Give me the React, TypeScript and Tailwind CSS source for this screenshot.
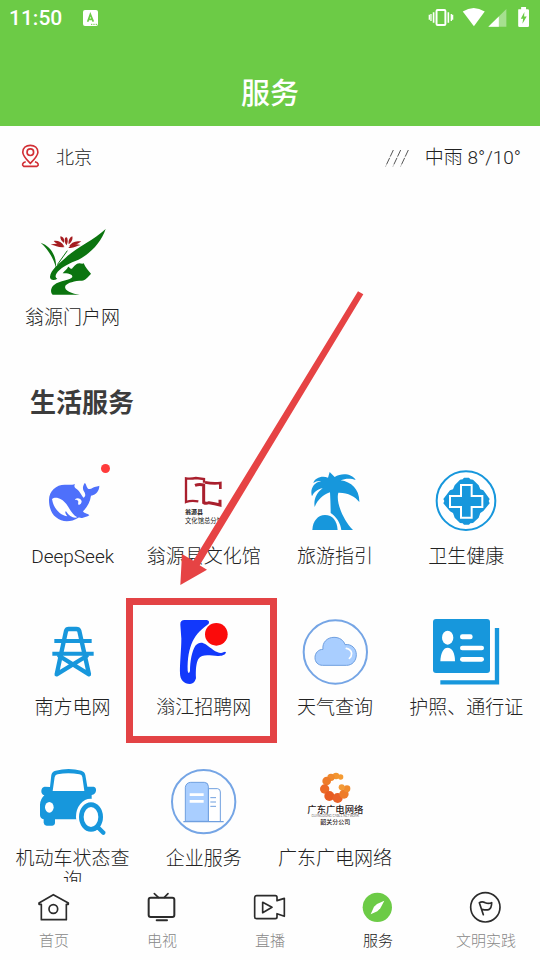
import type { ReactNode } from "react";

const BLUE = "#1797dc";

function Art({ box, children }: { box: string; children: ReactNode }) {
  return (
    <svg viewBox={box} className="size-full overflow-visible" aria-hidden="true">
      {children}
    </svg>
  );
}

function OrchidLogo() {
  return (
    <Art box="120 57 198 198">
      <g fill="#0b740f">
        <path d="M317 57C304 96 268 137 226 153C200 163 179 176 170 190C165 198 166 203 172 206C163 212 149 211 150 200C152 180 176 162 196 144C222 117 281 91 317 57Z" />
        <path d="M122 98C151 108 170 136 168 173C160 144 145 119 122 98Z" />
        <path d="M188 190C194 182 202 178 204 171C207 168 209 178 216 176C222 170 228 160 238 160C243 160 247 162 251 160C256 172 266 184 273 191C265 200 256 211 246 212C224 212 203 218 196 227C190 242 218 251 239 254L158 254C150 246 152 232 163 224C178 212 213 211 217 201C218 192 203 190 188 190Z" />
      </g>
      <path d="M172 164L202 122" stroke="#0b740f" strokeWidth="3" fill="none" />
      <g fill="#a51c20">
        <path d="M181 79C190 80 194 88 192 99C185 94 180 87 181 79Z" />
        <path d="M195 84C200 78 204 83 203 96L200 106C194 100 193 91 195 84Z" />
        <path d="M217 79C219 89 214 98 206 103C204 91 209 82 217 79Z" />
        <path d="M161 93C173 91 184 95 192 108C181 109 169 102 161 93Z" />
        <path d="M244 94C230 93 216 95 208 108C220 110 234 102 244 94Z" />
        <path d="M152 104C170 98 184 102 194 111C178 115 167 105 152 104Z" />
        <path d="M242 105C226 100 213 104 205 113C219 117 228 107 242 105Z" />
      </g>
    </Art>
  );
}

function WhaleLogo() {
  return (
    <Art box="120 54 198 198">
      <path
        d="M147 150C147 122 169 104 194 104C205 104 213 106 225 102C221 109 224 113 231 118C239 124 244 135 250 143C260 138 255 129 250 121C247 112 250 106 254 99C259 101 258 109 264 116C274 121 277 110 287 110C293 110 296 107 298 107C298 122 289 134 273 137C270 157 261 172 249 184C252 191 262 190 268 196C261 201 255 201 249 203C242 205 240 202 235 203C213 217 187 218 168 202C153 190 147 170 147 150Z"
        fill="#4e70fb"
      />
      <path
        d="M156 147C166 138 187 145 199 162C211 180 218 195 232 202C221 206 207 199 198 184C193 185 198 193 202 199C184 197 161 179 156 147Z"
        fill="#fff"
      />
      <path
        d="M225 148C232 142 243 146 245 154C245 160 241 164 236 165C232 159 237 156 234 152C232 149 228 152 225 148Z"
        fill="#fff"
      />
    </Art>
  );
}

function CultureLogo() {
  return (
    <Art box="514 54 198 198">
      <g stroke="#a91f2d" fill="none">
        <path d="M613 98V87L589 84Q573 87 559 85V156Q574 150 596 154" strokeWidth="7" />
        <path d="M586 106Q599 101 612 105V158Q619 162 628 158Q645 160 661 165V149" strokeWidth="9" />
        <path d="M616 97Q641 102 662 99V117" strokeWidth="8" />
      </g>
      <g fill="#222" fontFamily="Noto Sans CJK SC, sans-serif">
        <text x="556" y="193" fontSize="18" fontWeight="700">
          翁源县
        </text>
        <text x="556" y="219" fontSize="19" fontWeight="400">
          文化馆总分馆
        </text>
      </g>
    </Art>
  );
}

function PalmIcon() {
  return (
    <Art box="98 54 198 198">
      <g fill={BLUE}>
        <path d="M181 66L196 81C217 68 248 71 259 90C245 84 227 85 214 91C246 95 271 119 270 156C257 139 235 127 207 128C199 154 220 209 251 240H216C214 220 201 200 184 189C184 167 183 147 182 127C161 134 145 149 136 171C132 149 142 127 160 115C145 117 134 126 128 139C121 119 133 97 155 94C147 92 139 95 132 99C137 83 158 76 176 83Z" />
        <path d="M129 240C130 213 146 195 167 195C190 195 203 212 205 240Z" />
      </g>
    </Art>
  );
}

function HealthIcon() {
  return (
    <Art box="492 54 198 198">
      <circle cx="591" cy="152" r="88" fill="#fff" stroke={BLUE} strokeWidth="6" />
      <path
        d="M585 83H600L604 88L612 89L629 106L634 118L643 121L662 147L659 153L662 160L643 183L634 189L629 203L612 219L604 220L600 224H585L581 220L573 219L557 203L552 189L543 184L523 160L526 153L523 147L543 121L552 118L557 106L573 89L581 88Z"
        fill={BLUE}
      />
      <path
        d="M576 105H608V138H640V171H608V203H576V171H543V138H576Z"
        fill={BLUE}
        stroke="#fff"
        strokeWidth="6"
      />
      <path d="M592 113V195M551 154H633" stroke={BLUE} strokeWidth="13" />
    </Art>
  );
}

function PylonIcon() {
  return (
    <Art box="120 87 198 198">
      <g stroke={BLUE} fill="none" strokeLinejoin="round" strokeLinecap="round">
        <path
          d="M170 253L198 123Q200 117 206 117H229Q236 117 238 123L267 253L178 198M170 253L260 198"
          strokeWidth="13"
        />
        <path d="M163 153H275M157 191H281" strokeWidth="12" strokeLinecap="butt" />
      </g>
    </Art>
  );
}

function RecruitLogo() {
  return (
    <Art box="514 87 198 198">
      <path
        d="M555 90H621Q631 92 627 101C610 114 589 131 579 154C568 178 563 205 564 243Q567 255 571 243C571 211 577 184 587 167C596 157 607 155 618 163C634 174 648 189 664 189C671 188 676 182 679 187C677 197 664 198 654 198C633 197 606 190 596 207C589 221 588 240 589 265Q584 282 571 282C553 282 541 270 541 250C540 224 545 178 545 146L542 104Q541 90 555 90Z"
        fill="#1238fb"
      />
      <circle cx="650" cy="133" r="34" fill="#fb0b0b" />
    </Art>
  );
}

function WeatherIcon() {
  return (
    <Art box="68 57 198 198">
      <circle cx="168" cy="156" r="95" fill="none" stroke="#75a5e5" strokeWidth="6" />
      <path
        d="M131 148C128 128 143 112 164 112C181 112 193 121 197 134C216 131 231 145 231 164C231 183 218 196 202 196H130C116 196 107 186 107 173C107 159 117 148 131 148Z"
        fill="#a9ceff"
        stroke="#6f9fdf"
        strokeWidth="3"
      />
      <path
        d="M201 145Q215 148 217 160Q217 170 210 175"
        stroke="#fff"
        strokeWidth="5"
        strokeLinecap="round"
        fill="none"
      />
    </Art>
  );
}

function IdCardIcon() {
  return (
    <Art box="462 57 198 198">
      <rect x="462" y="57" width="171" height="162" rx="9" fill={BLUE} />
      <path d="M654 84V247H484" stroke={BLUE} strokeWidth="13" fill="none" />
      <g fill="#fff">
        <ellipse cx="506" cy="113" rx="17" ry="21" />
        <path d="M484 184C485 157 494 143 506 143C519 143 528 158 528 184Z" />
        <rect x="543" y="103" width="38" height="15" rx="7" />
        <rect x="543" y="137" width="72" height="14" rx="7" />
        <rect x="543" y="171" width="72" height="14" rx="7" />
      </g>
    </Art>
  );
}

function CarSearchIcon() {
  return (
    <Art box="120 45 198 198">
      <path
        d="M150 96L154 60Q156 49 167 47Q206 37 244 47Q254 50 256 60L262 95H281Q289 96 288 107Q287 117 275 120V205H232L230 193H165V205Q164 212 157 212H140Q132 211 131 203V193Q120 190 120 180V149Q121 132 133 121Q123 117 124 107Q125 96 134 95Z"
        fill={BLUE}
      />
      <path d="M158 108L164 66Q166 59 173 58Q205 52 238 58Q246 59 247 66L253 108Z" fill="#fff" />
      <ellipse cx="148" cy="157" rx="13" ry="16" fill="#fff" />
      <ellipse cx="272" cy="185" rx="44" ry="54" fill="#fff" />
      <ellipse cx="273" cy="186" rx="29" ry="37" fill="#fff" stroke={BLUE} strokeWidth="14" />
      <path d="M295 218L310 233" stroke={BLUE} strokeWidth="13" strokeLinecap="round" />
    </Art>
  );
}

function CompanyIcon() {
  return (
    <Art box="514 45 198 198">
      <circle cx="612" cy="140" r="95" fill="none" stroke="#75a5e5" strokeWidth="6" />
      <path
        d="M626 199V101H654Q662 102 662 111V199"
        fill="#fff"
        stroke="#6f9fdf"
        strokeWidth="3"
      />
      <path
        d="M557 199V97Q559 83 573 82H614Q626 83 626 94V199Z"
        fill="#a9ceff"
        stroke="#6f9fdf"
        strokeWidth="3"
      />
      <path d="M551 200H672" stroke="#6f9fdf" strokeWidth="4" />
      <path d="M570 119H612M570 139H612" stroke="#fff" strokeWidth="8" />
      <path d="M632 128H649M632 141H649M632 154H649" stroke="#6f9fdf" strokeWidth="3" />
    </Art>
  );
}

function CableLogo() {
  return (
    <Art box="158 45 198 198">
      <circle cx="274" cy="66" r="8" fill="#f49a32" />
      <circle cx="260" cy="63" r="10" fill="#f3952f" />
      <circle cx="245" cy="67" r="11" fill="#f0892d" />
      <circle cx="232" cy="78" r="13" fill="#ee7c2a" />
      <circle cx="226" cy="102" r="14" fill="#ec6a26" />
      <circle cx="240" cy="123" r="15" fill="#e85c22" />
      <circle cx="265" cy="129" r="15" fill="#e9622a" />
      <circle cx="284" cy="117" r="14" fill="#ee7c2a" />
      <circle cx="293" cy="101" r="10" fill="#f08b2d" />
      <circle cx="277" cy="97" r="9" fill="#f39a36" />
      <g fill="#2a2020" textAnchor="middle" fontFamily="Noto Sans CJK SC, sans-serif">
        <text x="258" y="173" fontSize="28" fontWeight="500">
          广东广电网络
        </text>
        <text x="258" y="187" fontSize="10" fontFamily="Roboto, sans-serif">
          GUANGDONG CABLE NETWORK
        </text>
        <text x="258" y="208" fontSize="18" fontWeight="500">
          韶关分公司
        </text>
      </g>
    </Art>
  );
}

type Service = {
  label: string;
  icon: ReactNode;
  dot?: boolean;
  marked?: boolean;
};

const services: Service[] = [
  { label: "DeepSeek", icon: <WhaleLogo />, dot: true },
  { label: "翁源县文化馆", icon: <CultureLogo /> },
  { label: "旅游指引", icon: <PalmIcon /> },
  { label: "卫生健康", icon: <HealthIcon /> },
  { label: "南方电网", icon: <PylonIcon /> },
  { label: "滃江招聘网", icon: <RecruitLogo />, marked: true },
  { label: "天气查询", icon: <WeatherIcon /> },
  { label: "护照、通行证", icon: <IdCardIcon /> },
  { label: "机动车状态查询", icon: <CarSearchIcon /> },
  { label: "企业服务", icon: <CompanyIcon /> },
  { label: "广东广电网络", icon: <CableLogo /> },
];

const tabs = [
  {
    label: "首页",
    icon: (
      <Art box="114 33 96 96">
        <g stroke="#2b2b2b" strokeWidth="5" fill="none" strokeLinejoin="round" strokeLinecap="round">
          <path d="M124 73H117V69L160 44L205 69V73H199V119H124Z" />
          <circle cx="160" cy="87" r="13" />
        </g>
      </Art>
    ),
  },
  {
    label: "电视",
    icon: (
      <Art box="438 33 96 96">
        <g stroke="#2b2b2b" fill="none" strokeLinecap="round">
          <rect x="446" y="53" width="77" height="58" rx="6" strokeWidth="6" />
          <path d="M463 41L475 52M504 41L493 52" strokeWidth="5" />
          <path d="M470 121H501" strokeWidth="6" />
        </g>
      </Art>
    ),
  },
  {
    label: "直播",
    icon: (
      <Art box="-48 33 96 96">
        <g stroke="#2b2b2b" strokeWidth="5" fill="none" strokeLinejoin="round">
          <path d="M-40 47H16Q21 47 21 52V62L43 55V109L21 101V111Q21 116 16 116H-40Q-46 116 -46 110V53Q-46 47 -40 47Z" />
          <path d="M-22 67V98L6 82Z" />
        </g>
      </Art>
    ),
  },
  {
    label: "服务",
    active: true,
    icon: (
      <Art box="276 33 96 96">
        <circle cx="322" cy="82" r="44" fill="#6ccb46" />
        <path d="M343 62L331 85L322 94L302 103L312 80L321 72Z" fill="#fff" />
      </Art>
    ),
  },
  {
    label: "文明实践",
    icon: (
      <Art box="600 33 96 96">
        <g stroke="#2b2b2b" strokeWidth="5" fill="none" strokeLinejoin="round" strokeLinecap="round">
          <circle cx="646" cy="82" r="44" />
          <path d="M640 104L628 68Q636 63 646 68Q655 72 665 68Q665 84 656 89Q648 91 636 88" />
        </g>
      </Art>
    ),
  },
];

function ServiceItem({ label, icon, dot, marked }: Service) {
  return (
    <a href="#" className="relative flex flex-col items-center">
      <span className="relative size-[66px]">
        {icon}
        {dot && <span className="absolute -top-1 -right-1 size-[9px] rounded-full bg-[#ff3b3b]" />}
      </span>
      <span className="mt-3 text-center text-[19px] leading-[22px] break-all">{label}</span>
      {marked && (
        <>
          <span className="absolute -top-[21px] -right-[7px] -bottom-6 -left-3 z-10 border-[7px] border-[#e34345]" />
          <svg
            viewBox="60 33 552 882"
            className="absolute bottom-full left-[42px] z-10 mb-[34px] h-[294px] w-[184px] max-w-none"
            aria-hidden="true"
          >
            <path d="M594 34L610 43L119 856L141 869L61 915L66 822L100 842Z" fill="#e64344" />
          </svg>
        </>
      )}
    </a>
  );
}

function StatusBar() {
  return (
    <div className="flex h-9 items-center pr-2.5 pl-[9px]">
      <span className="mt-0.5 text-[21px] font-medium">11:50</span>
      <svg viewBox="0 0 45 48" className="ml-[21px] h-4 w-[15px]" aria-hidden="true">
        <rect width="45" height="48" rx="6" fill="#fff" />
        <path d="M14 35L22 13L31 35M17 28H28" stroke="#6ccb46" strokeWidth="5" fill="none" />
        <path d="M24 43H42" stroke="#6ccb46" strokeWidth="3" strokeDasharray="4 3" />
      </svg>
      <svg viewBox="474 21 307 61" className="mb-0.5 ml-auto h-5 w-[102px]" aria-hidden="true">
        <rect x="498" y="30" width="27" height="46" rx="3" fill="none" stroke="#fff" strokeWidth="6" />
        <path d="M489 37V69M534 37V69" stroke="#fff" strokeWidth="5" />
        <path d="M481 42V64M543 42V64M476 45V60M547 45V60" stroke="#fff" strokeWidth="4" />
        <path d="M578 35Q611 13 645 35L612 80Z" fill="#fff" />
        <path d="M711 27V81H656Z" fill="#fff" opacity="0.4" />
        <path d="M688 50V81H656Z" fill="#fff" />
        <path
          d="M748 28H756V21H771V28H776Q780 28 780 32V78Q780 82 776 82H751Q747 82 747 78V32Q747 28 748 28Z"
          fill="#fff"
        />
        <path d="M766 36L755 57H762L760 72L773 50H765Z" fill="#6ccb46" />
      </svg>
    </div>
  );
}

export default function App() {
  return (
    <div className="flex h-screen flex-col bg-[#fefefe] font-['Roboto','Noto_Sans_CJK_SC',sans-serif] text-[#222]">
      <header className="h-[126px] shrink-0 bg-[#6ccb46] text-white">
        <StatusBar />
        <h1 className="mt-[25px] text-center text-[29px] leading-[66px] font-medium">服务</h1>
      </header>

      <main className="flex-1 overflow-hidden font-light">
        <div className="flex h-16 items-center justify-between pr-[19px] pl-5">
          <div className="flex items-center gap-4">
            <svg viewBox="60 424 60 76" className="mb-1.5 h-[25px] w-5" aria-hidden="true">
              <g stroke="#d22f35" strokeWidth="5" fill="none">
                <path d="M91 486C76 471 68 461 68 452C68 439 78 431 91 431C104 431 114 439 114 452C114 461 106 471 91 486Z" />
                <circle cx="91" cy="452" r="10" />
                <path d="M77 481C66 484 65 491 71 495H111C118 491 116 484 105 481" />
              </g>
            </svg>
            <span className="text-lg">北京</span>
          </div>
          <div className="flex items-center gap-4">
            <svg viewBox="345 445 72 54" className="h-[18px] w-6" aria-hidden="true">
              <path
                d="M370 448L347 497M392 448L369 497M415 448L392 497"
                stroke="#555"
                strokeWidth="3"
                strokeDasharray="22 4"
              />
            </svg>
            <span className="text-[19px]">中雨 8°/10°</span>
          </div>
        </div>

        <section className="mt-[39px] grid grid-cols-4 pr-2 pl-[7px]">
          <ServiceItem label="翁源门户网" icon={<OrchidLogo />} />
        </section>

        <section>
          <h2 className="mt-14 mb-[47px] px-[30px] text-[26px] leading-9 font-bold text-[#3c3c3c]">
            生活服务
          </h2>
          <div className="grid grid-cols-4 gap-y-[51px] pr-2 pl-[7px]">
            {services.map((s) => (
              <ServiceItem key={s.label} {...s} />
            ))}
          </div>
        </section>
      </main>

      <nav className="grid shrink-0 grid-cols-5 py-[9px] text-[15px] leading-5 font-light">
        {tabs.map((t) => (
          <a
            key={t.label}
            href="#"
            className={`flex flex-col items-center gap-2 ${t.active ? "text-[#222]" : "text-[#888]"}`}
          >
            <span className="size-8">{t.icon}</span>
            {t.label}
          </a>
        ))}
      </nav>
    </div>
  );
}
